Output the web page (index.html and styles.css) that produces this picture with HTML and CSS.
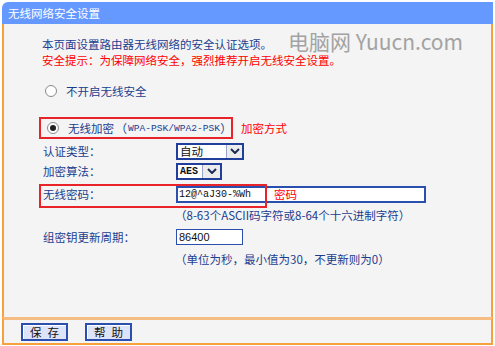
FILE: index.html
```html
<!DOCTYPE html>
<html lang="zh-CN">
<head>
<meta charset="utf-8">
<title>无线网络安全设置</title>
<link rel="stylesheet" href="styles.css">
</head>
<body>
<div class="panel">
  <div class="title">无线网络安全设置</div>
  <div class="content">
    <div class="watermark">电脑网 Yuucn.com</div>
    <div class="intro">
      <div>本页面设置路由器无线网络的安全认证选项。</div>
      <div class="warn">安全提示：为保障网络安全，强烈推荐开启无线安全设置。</div>
    </div>
    <div class="opt opt1">
      <span class="radio"></span>
      <span>不开启无线安全</span>
    </div>
    <div class="opt2-row">
      <div class="opt opt2">
        <span class="radio checked"></span>
        <span class="opt2-text">无线加密<span class="paren">（</span><span class="mono">WPA-PSK/WPA2-PSK</span><span class="paren-r">）</span></span>
      </div>
      <span class="note">加密方式</span>
    </div>
    <div class="row r-auth">
      <span class="label">认证类型：</span>
      <div class="select s-auth"><span class="val">自动</span><span class="arrow"><svg width="10" height="6" viewBox="0 0 10 6"><path d="M1 1 L5 5 L9 1" fill="none" stroke="#1b2a55" stroke-width="2"/></svg></span></div>
    </div>
    <div class="row r-alg">
      <span class="label">加密算法：</span>
      <div class="select s-alg"><span class="val mono-s">AES</span><span class="arrow"><svg width="10" height="6" viewBox="0 0 10 6"><path d="M1 1 L5 5 L9 1" fill="none" stroke="#1b2a55" stroke-width="2"/></svg></span></div>
    </div>
    <div class="row r-pw">
      <span class="label">无线密码：</span>
      <div class="input pw"><span class="mono-v">12@^aJ30-%Wh</span></div>
      <span class="pw-note">密码</span>
    </div>
    <div class="row r-hint1">
      <span></span>
      <span class="hint">（8-63个ASCII码字符或8-64个十六进制字符）</span>
    </div>
    <div class="row r-group">
      <span class="label">组密钥更新周期：</span>
      <div class="input grp"><span class="num">86400</span></div>
    </div>
    <div class="row r-hint2">
      <span></span>
      <span class="hint">（单位为秒，最小值为30，不更新则为0）</span>
    </div>
  </div>
  <div class="footer">
    <button class="btn"><span>保</span><span>存</span></button>
    <button class="btn"><span>帮</span><span>助</span></button>
  </div>
</div>
</body>
</html>
```

FILE: styles.css
```css
* { box-sizing: border-box; }
html, body { background: #ffffff; }
body {
  margin: 2px;
  font-family: "Noto Sans CJK SC", "Noto Sans", sans-serif;
  font-size: 11.5px;
  color: #1b3d8f;
}
.panel {
  display: flex;
  flex-direction: column;
  width: 491px;
}
.title {
  height: 22px;
  background: #6699ff;
  color: #ffffff;
  border-top-left-radius: 6px;
  padding-left: 6px;
  line-height: 22px;
  font-size: 11.5px;
}
.content {
  position: relative;
  height: 293px;
  background: #f4f4f4;
  border-left: 2px solid #f7a13c;
  border-right: 2px solid #f7a13c;
}
.watermark {
  position: absolute;
  left: 284px;
  top: 2px;
  font-family: "Noto Sans CJK SC", "Noto Sans", sans-serif;
  font-size: 21px;
  color: #a3a3a3;
  white-space: nowrap;
}
.intro {
  margin: 12px 0 0 38px;
  line-height: 16px;
}
.warn { color: #ff0000; }
.opt {
  display: flex;
  align-items: center;
  height: 20px;
  white-space: nowrap;
}
.opt1 {
  margin: 13px 0 0 41px;
  gap: 9px;
}
.radio {
  width: 12px;
  height: 12px;
  border-radius: 50%;
  border: 1px solid #8a8a8a;
  background: #ffffff;
  display: flex;
  align-items: center;
  justify-content: center;
  flex: none;
}
.radio.checked::after {
  content: "";
  width: 6px;
  height: 6px;
  border-radius: 50%;
  background: #222222;
}
.opt2-row {
  display: flex;
  align-items: center;
  margin: 16px 0 0 35px;
  height: 22px;
}
.opt2 {
  width: 194px;
  height: 22px;
  border: 2px solid #e8242a;
  padding-left: 6px;
  gap: 9px;
}
.opt2-text {
  display: flex;
  align-items: center;
}
.paren {
  display: inline-block;
  width: 13px;
  text-align: right;
}
.paren-r {
  display: inline-block;
  width: 10px;
  overflow: hidden;
}
.mono {
  font-family: "Liberation Mono", monospace;
  font-size: 9.6px;
  margin-left: 1px;
}
.note {
  color: #ff0000;
  margin-left: 8px;
}
.row {
  position: relative;
  display: grid;
  grid-template-columns: 137px auto;
  align-items: center;
  height: 20px;
  margin-left: 35px;
}
.label { padding-left: 4px; }
.r-auth { margin-top: 2px; }
.r-alg { margin-top: 0; }
.r-pw { margin-top: 3px; }
.r-hint1 { margin-top: 1px; }
.r-group { margin-top: 2px; }
.r-hint2 { margin-top: 2px; }
.r-pw::after {
  content: "";
  position: absolute;
  left: 0;
  top: 0;
  width: 224px;
  height: 20px;
  border: 2px solid #e8242a;
  pointer-events: none;
}
.select {
  display: flex;
  align-items: stretch;
  height: 17px;
  background: #ffffff;
  border: 2px solid #1f3f9a;
  color: #101010;
}
.s-auth { width: 68px; }
.s-alg { width: 46px; }
.select .val {
  flex: 1;
  padding-left: 2px;
  line-height: 13px;
}
.mono-s {
  font-family: "Liberation Mono", monospace;
  font-size: 10px;
  font-weight: bold;
}
.select .arrow {
  width: 16px;
  background: #ececec;
  border-left: 1px solid #9aa6c8;
  display: flex;
  align-items: center;
  justify-content: center;
}
.s-alg .arrow { width: 18px; }
.input {
  display: flex;
  align-items: center;
  background: #ffffff;
  color: #101010;
}
.pw {
  width: 250px;
  height: 17px;
  border: 2px solid #2a4fae;
  padding-left: 1px;
}
.mono-v {
  font-family: "Liberation Mono", monospace;
  font-size: 10px;
}
.pw-note {
  position: absolute;
  left: 235px;
  top: 1px;
  color: #ff0000;
  line-height: 18px;
}
.grp {
  width: 67px;
  height: 16px;
  border: 1px solid #2a4fae;
  padding-left: 2px;
}
.num {
  font-family: "Liberation Sans", sans-serif;
  font-size: 11px;
}
.hint { margin-left: -1px; }
.footer {
  display: flex;
  align-items: center;
  gap: 17px;
  height: 28px;
  padding: 1px 0 0 17px;
  background: #f4f4f4;
  border-top: 3px solid #f6bd82;
  border-left: 2px solid #f7a13c;
  border-right: 2px solid #f7a13c;
  border-bottom: 2px solid #f7a13c;
}
.btn {
  display: flex;
  align-items: center;
  justify-content: center;
  gap: 6px;
  width: 47px;
  height: 18px;
  padding: 0;
  font-family: "Noto Sans CJK SC", sans-serif;
  font-size: 11.5px;
  color: #111111;
  background: #dde3f8;
  border: 2px solid #2a4fae;
  box-shadow: inset 1px 1px 0 #ffffff;
  line-height: 14px;
}
```
